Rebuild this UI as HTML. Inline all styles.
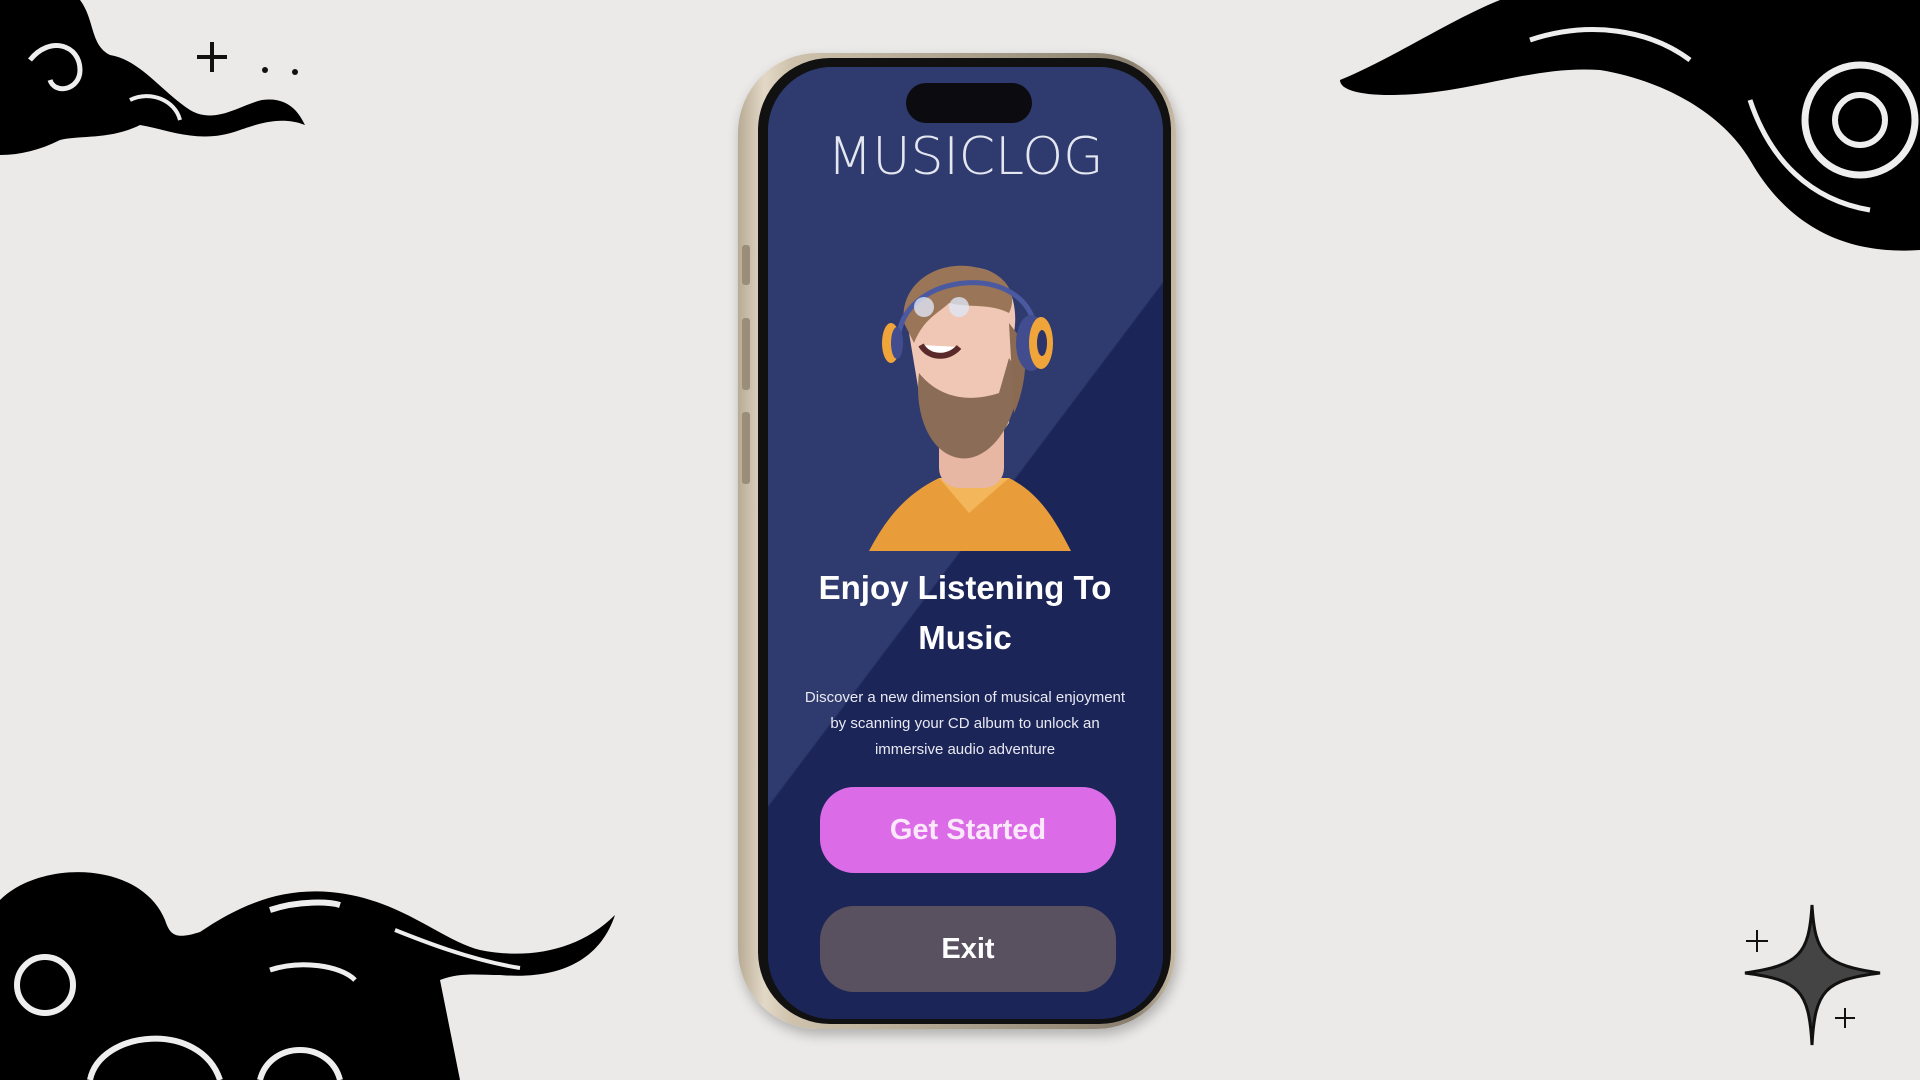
<!DOCTYPE html>
<html><head><meta charset="utf-8"><style>
html,body{margin:0;padding:0}
body{width:1920px;height:1080px;position:relative;overflow:hidden;background:#ebeae8;font-family:"Liberation Sans",sans-serif}
.abs{position:absolute}
.phone{left:738px;top:53px;width:438px;height:976px;border-radius:80px;background:linear-gradient(90deg,#b8ab95,#e2d8c6 6%,#cfc3ad 12%,#8a7f6e 90%,#c8bca6);box-shadow:2px 6px 12px rgba(0,0,0,.25)}
.bezel{left:758px;top:58px;width:413px;height:966px;border-radius:72px;background:#111}
.screen{left:768px;top:67px;width:395px;height:952px;border-radius:64px;overflow:hidden;background:#1c2558}
.tri{left:0;top:0;width:100%;height:100%;background:linear-gradient(127deg,#2f3b6e 0%,#2f3b6e 50%,#1c2558 50.2%)}
.island{left:906px;top:83px;width:126px;height:40px;border-radius:20px;background:#0b0b10}
.t{color:#fff;text-align:center;width:395px;left:768px}
.btn{border-radius:34px;color:#fff;font-weight:bold;text-align:center}
</style></head><body>
<div class="abs phone"></div>
<div class="abs" style="left:742px;top:245px;width:8px;height:40px;background:#9a8e7a;border-radius:3px"></div>
<div class="abs" style="left:742px;top:318px;width:8px;height:72px;background:#9a8e7a;border-radius:3px"></div>
<div class="abs" style="left:742px;top:412px;width:8px;height:72px;background:#9a8e7a;border-radius:3px"></div>
<div class="abs bezel"></div>
<div class="abs screen"><div class="abs tri"></div></div>
<div class="abs island"></div>
<div class="abs t" style="top:127px;font-size:52px;letter-spacing:0px;color:#e4e6f0;font-family:'DejaVu Sans','Liberation Sans',sans-serif;font-weight:200">MUSICLOG</div>
<svg class="abs" style="left:869px;top:263px" width="202" height="290" viewBox="0 0 202 290">
<path d="M0 288 C20 250 40 230 70 215 L140 215 C170 230 185 255 202 288Z" fill="#e99d3a"/>
<path d="M70 215 L100 250 L140 215Z" fill="#f3b65a"/>
<rect x="70" y="140" width="65" height="85" rx="20" fill="#e7b7a4"/>
<path d="M40 70 C40 20 80 0 110 5 C140 10 150 40 145 70 L140 160 C120 190 70 190 55 160 Z" fill="#f0c7b4"/>
<path d="M50 110 C70 135 100 140 130 130 L140 95 L150 110 C150 160 120 200 90 195 C60 190 45 150 50 110Z" fill="#8b6c56"/>
<path d="M35 60 C30 20 70 -5 110 5 C135 10 150 30 140 50 C120 40 100 45 80 40 C70 50 55 55 45 80Z" fill="#9a7558"/>
<path d="M140 60 L145 150 C150 140 160 110 155 80Z" fill="#8a6a52"/>
<path d="M30 70 C40 10 150 0 165 60 L170 90" stroke="#4b5aa0" stroke-width="5" fill="none"/>
<ellipse cx="162" cy="80" rx="15" ry="28" fill="#414d8e"/><ellipse cx="172" cy="80" rx="12" ry="26" fill="#f0a53a"/><ellipse cx="173" cy="80" rx="5" ry="13" fill="#2c356a"/>
<ellipse cx="22" cy="80" rx="9" ry="20" fill="#f0a53a"/><ellipse cx="28" cy="80" rx="6" ry="16" fill="#414d8e"/>
<circle cx="55" cy="44" r="10" fill="#dfe6f5" opacity=".8"/><circle cx="90" cy="44" r="10" fill="#dfe6f5" opacity=".8"/>
<path d="M52 82 C60 96 80 96 90 84" stroke="#5a2a2a" stroke-width="6" fill="#fff"/>
</svg>
<div class="abs t" style="top:563px;font-size:33px;font-weight:bold;line-height:50px;width:300px;left:815px">Enjoy Listening To Music</div>
<div class="abs t" style="top:685px;font-size:15px;line-height:26px;color:#e8e9f2;width:330px;left:800px">Discover a new dimension of musical enjoyment by scanning your CD album to unlock an immersive audio adventure</div>
<div class="abs btn" style="left:820px;top:787px;width:296px;height:86px;line-height:86px;background:#dc6be8;font-size:29px;color:#fbe8fb">Get Started</div>
<div class="abs btn" style="left:820px;top:906px;width:296px;height:86px;line-height:86px;background:#5a5160;font-size:29px">Exit</div>
<svg class="abs" style="left:0;top:0" width="320" height="160" viewBox="0 0 320 160">
<path d="M0 0 L80 0 C95 20 90 45 110 55 C140 60 160 90 190 110 C215 125 240 105 262 100 C290 96 300 115 305 125 C280 115 255 125 240 130 C200 145 170 130 140 125 C110 140 80 135 60 140 C40 150 20 155 0 155Z" fill="#000"/>
<path d="M30 60 C50 35 80 45 80 70 C80 90 55 95 50 80" stroke="#eee" stroke-width="5" fill="none"/>
<path d="M130 100 C150 90 175 100 180 120" stroke="#eee" stroke-width="4" fill="none"/>
<path d="M212 42 L212 72 M197 57 L227 57" stroke="#111" stroke-width="4"/>
<circle cx="265" cy="70" r="3" fill="#111"/><circle cx="295" cy="72" r="3" fill="#111"/>
</svg>
<svg class="abs" style="left:1330px;top:0" width="590" height="255" viewBox="0 0 590 255">
<path d="M10 80 C60 60 120 20 170 0 L590 0 L590 250 C520 255 460 230 420 160 C390 110 330 80 270 70 C200 65 140 95 60 95 C30 95 10 90 10 80Z" fill="#000"/>
<circle cx="530" cy="120" r="55" stroke="#eee" stroke-width="7" fill="none"/>
<circle cx="530" cy="120" r="25" stroke="#eee" stroke-width="6" fill="none"/>
<path d="M200 40 C260 20 320 30 360 60" stroke="#eee" stroke-width="5" fill="none"/>
<path d="M420 100 C440 160 480 200 540 210" stroke="#eee" stroke-width="5" fill="none"/>
</svg>
<svg class="abs" style="left:0;top:860px" width="620" height="220" viewBox="0 0 620 220">
<path d="M0 40 C40 0 140 0 165 60 C170 75 175 80 200 72 C240 45 280 28 330 32 C400 38 440 80 480 90 C530 100 580 90 615 55 C600 100 560 120 500 115 C480 115 460 112 440 120 L460 220 L0 220Z" fill="#000"/>
<circle cx="45" cy="125" r="28" stroke="#eee" stroke-width="6" fill="none"/>
<path d="M270 110 C300 100 340 105 355 120" stroke="#eee" stroke-width="5" fill="none"/>
<path d="M90 220 C100 170 200 160 220 220" stroke="#eee" stroke-width="6" fill="none"/>
<path d="M260 220 C270 180 330 180 340 220" stroke="#eee" stroke-width="6" fill="none"/>
<path d="M270 50 C300 40 330 42 340 45" stroke="#eee" stroke-width="6" fill="none"/>
<path d="M395 70 C420 80 470 100 520 108" stroke="#eee" stroke-width="4" fill="none"/>
</svg>
<svg class="abs" style="left:1735px;top:900px" width="160" height="150" viewBox="0 0 160 150">
<path d="M77 5 C80 55 90 65 145 73 C90 80 80 90 77 145 C74 90 64 80 10 73 C64 65 74 55 77 5Z" fill="#444" stroke="#111" stroke-width="3"/>
<path d="M22 30 L22 52 M11 41 L33 41" stroke="#111" stroke-width="2"/>
<path d="M110 108 L110 128 M100 118 L120 118" stroke="#111" stroke-width="2"/>
</svg>
</body></html>
